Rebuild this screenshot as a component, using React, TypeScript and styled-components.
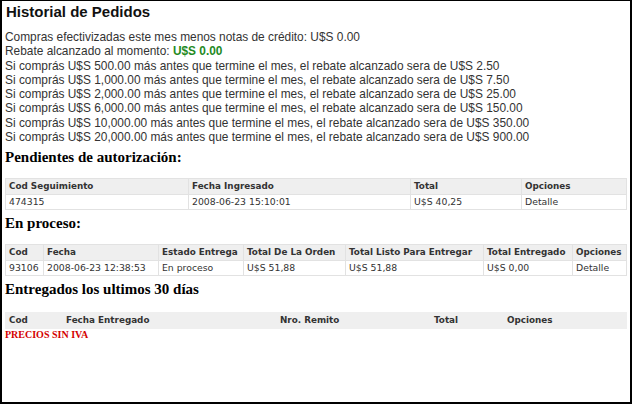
import styled, { createGlobalStyle } from "styled-components";

const GlobalStyle = createGlobalStyle`
  html, body {
    margin: 0;
    padding: 0;
    background: #ffffff;
  }
`;

const Frame = styled.div`
  box-sizing: border-box;
  width: 632px;
  height: 404px;
  border-style: solid;
  border-color: #000000;
  border-width: 1px 2px 2px 2px;
  padding: 1px 3px 0 3px;
  overflow: hidden;
  background: #ffffff;
`;

const Title = styled.h1`
  margin: 0 0 8px 0;
  padding-left: 1px;
  font-family: "Liberation Sans", Arial, sans-serif;
  font-size: 15px;
  font-weight: bold;
  line-height: 20px;
  color: #111111;
`;

const Summary = styled.div`
  font-family: "Liberation Sans", Arial, sans-serif;
  font-size: 11.9px;
  line-height: 14.3px;
  color: #333333;
`;

const Line = styled.div`
  white-space: nowrap;
`;

const Green = styled.span`
  color: #1f8a1f;
  font-weight: bold;
`;

const SectionTitle = styled.h2<{ $gap: number }>`
  margin: ${(p) => p.$gap}px 0 0 0;
  font-family: "Liberation Serif", "Times New Roman", serif;
  font-size: 15px;
  font-weight: bold;
  line-height: 18px;
  color: #000000;
`;

const Table = styled.table<{ $gap: number }>`
  margin-top: ${(p) => p.$gap}px;
  width: 621px;
  border-collapse: collapse;
  table-layout: fixed;
  font-family: "DejaVu Sans", Verdana, sans-serif;
  color: #333333;
`;

const Th = styled.th<{ $lined?: boolean }>`
  height: 15px;
  padding: 0 3px;
  text-align: left;
  font-size: 8.8px;
  font-weight: bold;
  line-height: 15px;
  background: #efefef;
  border: 1px solid ${(p) => (p.$lined ? "#e2e2e2" : "#efefef")};
  white-space: nowrap;
  overflow: hidden;
`;

const Td = styled.td`
  height: 14px;
  padding: 0 3px;
  font-size: 9.3px;
  line-height: 14px;
  border: 1px solid #e2e2e2;
  white-space: nowrap;
  overflow: hidden;
`;

const Note = styled.div`
  margin-top: 0;
  font-family: "Liberation Serif", "Times New Roman", serif;
  font-size: 10px;
  font-weight: bold;
  line-height: 12px;
  color: #d40000;
`;

const rebates = [
  ["500.00", "2.50"],
  ["1,000.00", "7.50"],
  ["2,000.00", "25.00"],
  ["6,000.00", "150.00"],
  ["10,000.00", "350.00"],
  ["20,000.00", "900.00"],
];

const App = () => {
  return (
    <Frame>
      <GlobalStyle />
      <Title>Historial de Pedidos</Title>
      <Summary>
        <Line>Compras efectivizadas este mes menos notas de crédito: U$S 0.00</Line>
        <Line>
          Rebate alcanzado al momento: <Green>U$S 0.00</Green>
        </Line>
        {rebates.map(([amount, rebate]) => (
          <Line key={amount}>
            Si comprás U$S {amount} más antes que termine el mes, el rebate alcanzado sera de U$S{" "}
            {rebate}
          </Line>
        ))}
      </Summary>

      <SectionTitle $gap={4}>Pendientes de autorización:</SectionTitle>
      <Table $gap={12}>
        <colgroup>
          <col style={{ width: 183 }} />
          <col style={{ width: 222 }} />
          <col style={{ width: 111 }} />
          <col style={{ width: 105 }} />
        </colgroup>
        <thead>
          <tr>
            <Th $lined>Cod Seguimiento</Th>
            <Th $lined>Fecha Ingresado</Th>
            <Th $lined>Total</Th>
            <Th $lined>Opciones</Th>
          </tr>
        </thead>
        <tbody>
          <tr>
            <Td>474315</Td>
            <Td>2008-06-23 15:10:01</Td>
            <Td>U$S 40,25</Td>
            <Td>Detalle</Td>
          </tr>
        </tbody>
      </Table>

      <SectionTitle $gap={4}>En proceso:</SectionTitle>
      <Table $gap={12}>
        <colgroup>
          <col style={{ width: 38 }} />
          <col style={{ width: 115 }} />
          <col style={{ width: 85 }} />
          <col style={{ width: 102 }} />
          <col style={{ width: 138 }} />
          <col style={{ width: 89 }} />
          <col style={{ width: 54 }} />
        </colgroup>
        <thead>
          <tr>
            <Th $lined>Cod</Th>
            <Th $lined>Fecha</Th>
            <Th $lined>Estado Entrega</Th>
            <Th $lined>Total De La Orden</Th>
            <Th $lined>Total Listo Para Entregar</Th>
            <Th $lined>Total Entregado</Th>
            <Th $lined>Opciones</Th>
          </tr>
        </thead>
        <tbody>
          <tr>
            <Td>93106</Td>
            <Td>2008-06-23 12:38:53</Td>
            <Td>En proceso</Td>
            <Td>U$S 51,88</Td>
            <Td>U$S 51,88</Td>
            <Td>U$S 0,00</Td>
            <Td>Detalle</Td>
          </tr>
        </tbody>
      </Table>

      <SectionTitle $gap={4}>Entregados los ultimos 30 días</SectionTitle>
      <Table $gap={14}>
        <colgroup>
          <col style={{ width: 57 }} />
          <col style={{ width: 214 }} />
          <col style={{ width: 154 }} />
          <col style={{ width: 73 }} />
          <col style={{ width: 123 }} />
        </colgroup>
        <thead>
          <tr>
            <Th>Cod</Th>
            <Th>Fecha Entregado</Th>
            <Th>Nro. Remito</Th>
            <Th>Total</Th>
            <Th>Opciones</Th>
          </tr>
        </thead>
      </Table>
      <Note>PRECIOS SIN IVA</Note>
    </Frame>
  );
};

export default App;
